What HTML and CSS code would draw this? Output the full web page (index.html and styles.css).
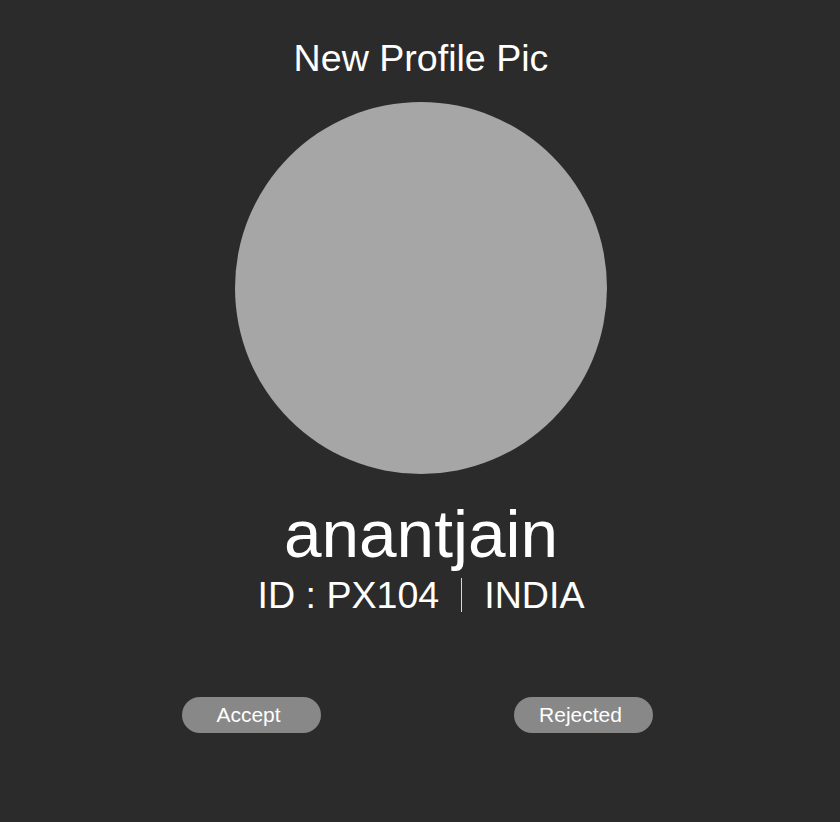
FILE: index.html
```html
<!DOCTYPE html>
<html>
<head>
<meta charset="utf-8">
<link rel="stylesheet" href="styles.css">
</head>
<body>
<main class="card">
  <h1 class="title">New Profile Pic</h1>
  <div class="avatar"></div>
  <div class="name">anantjain</div>
  <div class="meta">
    <span class="meta-id">ID : PX104</span>
    <span class="meta-sep"></span>
    <span class="meta-country">INDIA</span>
  </div>
  <div class="actions">
    <button class="btn">Accept</button>
    <button class="btn">Rejected</button>
  </div>
</main>
</body>
</html>
```
FILE: styles.css
```css
html, body {
  margin: 0;
  padding: 0;
  background: #2b2b2b;
  height: 100%;
}
body {
  font-family: "Liberation Sans", Arial, sans-serif;
  color: #ffffff;
}
.card {
  display: flex;
  flex-direction: column;
  align-items: center;
  padding: 37px 0 0 2px;
}
.title {
  margin: 0;
  font-size: 37.6px;
  line-height: 42px;
  font-weight: 400;
}
.avatar {
  margin-top: 23px;
  width: 372px;
  height: 372px;
  border-radius: 50%;
  background: #a6a6a6;
}
.name {
  margin-top: 26px;
  font-size: 67.5px;
  line-height: 68px;
}
.meta {
  margin-top: 7px;
  display: flex;
  align-items: center;
  font-size: 37.6px;
  line-height: 40px;
}
.meta-sep {
  width: 1px;
  height: 34px;
  background: #d8d8d8;
  margin: 0 22px;
}
.actions {
  margin-top: 82px;
  display: flex;
  gap: 193px;
  padding-right: 7px;
}
.btn {
  width: 139px;
  height: 36px;
  border: none;
  border-radius: 18px;
  background: #888888;
  color: #ffffff;
  font-family: "Liberation Sans", Arial, sans-serif;
  font-size: 21px;
  padding: 0 6px 0 0;
}
```
